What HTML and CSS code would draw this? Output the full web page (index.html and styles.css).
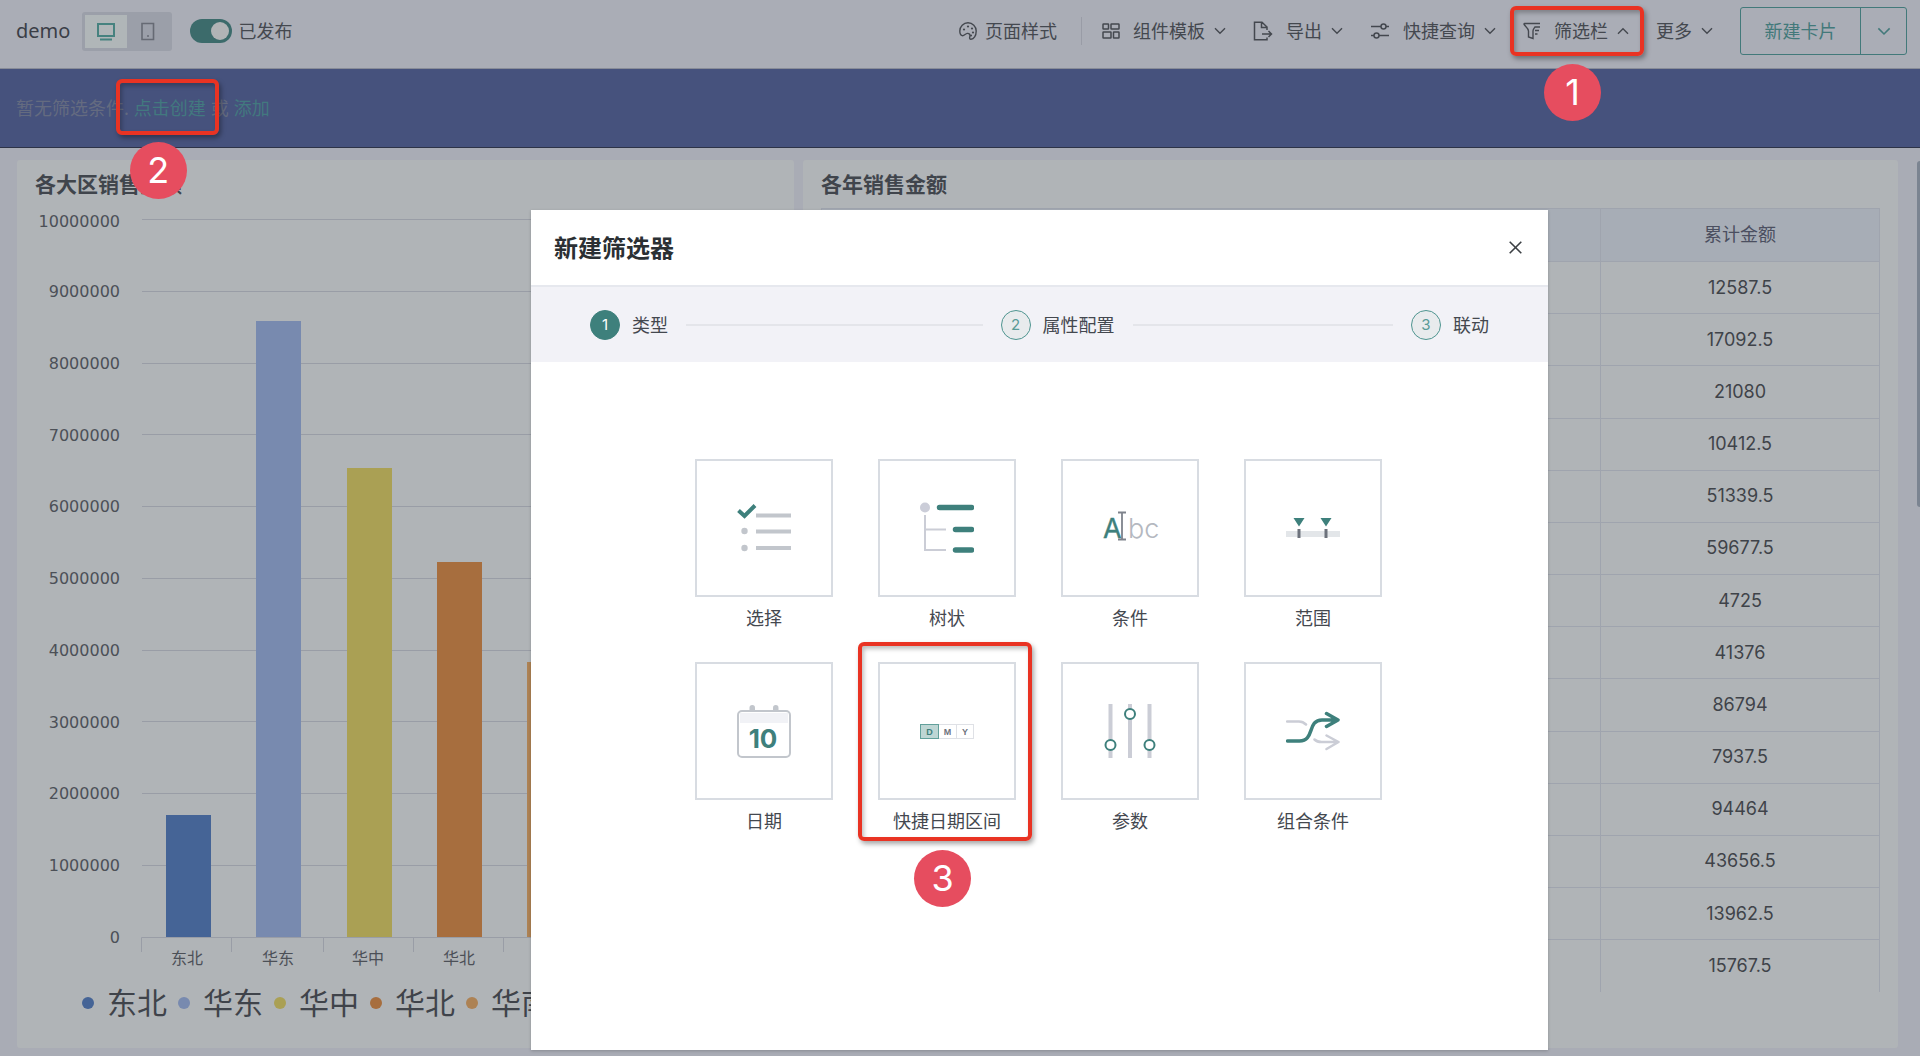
FILE: index.html
```html
<!DOCTYPE html>
<html lang="zh-CN">
<head>
<meta charset="utf-8">
<title>demo</title>
<link rel="stylesheet" href="styles.css">
</head>
<body>
<svg class="defs" aria-hidden="true">
  <symbol id="down" viewBox="0 0 12 8"><path d="M1 1.2l5 5 5-5" fill="none" stroke="currentColor" stroke-width="1.4"/></symbol>
  <symbol id="up" viewBox="0 0 12 8"><path d="M1 6.8l5-5 5 5" fill="none" stroke="currentColor" stroke-width="1.4"/></symbol>
</svg>

<header class="topbar">
  <h1 class="page-name">demo</h1>
  <div class="devices">
    <button class="device active" type="button" aria-label="桌面">
      <svg width="18" height="19" viewBox="0 0 18 19" fill="none" stroke="currentColor" stroke-width="2"><path d="M1 2h16v12H1zM3 17.5h12"/></svg>
    </button>
    <button class="device" type="button" aria-label="手机">
      <svg width="14" height="19" viewBox="0 0 14 19" fill="none" stroke="currentColor" stroke-width="1.6"><path d="M1 1.5h11.500v16H1z"/><path d="M6 14h2"/></svg>
    </button>
  </div>
  <label class="publish"><input type="checkbox" class="switch" checked>已发布</label>

  <nav class="tools">
    <button class="tool tight" type="button">
      <svg width="18" height="18" viewBox="0 0 18 18" fill="none" stroke="currentColor" stroke-width="1.4"><path d="M9 .8a8.200 8.200 0 0 1 8.200 8.200c0 5-2.400 8.200-5.200 8.200-1.400 0-1.600-1.200-1.200-2.400.7-2-.4-3.600-2.600-3.400-1.700.2-3.200 2.800-5 2.300C1.400 13.200.8 11.200.8 9A8.200 8.200 0 0 1 9 .8z"/><g fill="currentColor" stroke="none"><circle cx="5" cy="7.500" r="1.100"/><circle cx="9" cy="4.500" r="1.100"/><circle cx="13" cy="6.500" r="1.100"/><circle cx="14" cy="10.500" r="1.100"/><circle cx="12" cy="13.500" r="1.100"/></g></svg>
      <span>页面样式</span>
    </button>
    <span class="divider"></span>
    <button class="tool" type="button">
      <svg width="18" height="18" viewBox="0 0 18 18" fill="none" stroke="currentColor" stroke-width="1.500"><rect x="1" y="2" width="5.500" height="5" rx=".5"/><rect x="9" y="2" width="8" height="5" rx=".5"/><rect x="1" y="10" width="8" height="6" rx=".5"/><rect x="11.500" y="10" width="5.500" height="6" rx=".5"/></svg>
      <span>组件模板</span><svg class="chev"><use href="#down"/></svg>
    </button>
    <button class="tool export" type="button">
      <svg width="20" height="20" viewBox="0 0 20 20" fill="none" stroke="currentColor" stroke-width="1.500"><path d="M14 9V6L9 1.200H1.500v17.600H14v-2.300M8.500 1.500v5H14M9 13h9M15.500 10l3 3-3 3"/></svg>
      <span>导出</span><svg class="chev"><use href="#down"/></svg>
    </button>
    <button class="tool" type="button">
      <svg width="20" height="18" viewBox="0 0 20 18" fill="none" stroke="currentColor" stroke-width="1.500"><path d="M1 4.500h10M16 4.500h3M1 13.500h3M9 13.500h10"/><circle cx="13.500" cy="4.500" r="2.500"/><circle cx="6.500" cy="13.500" r="2.500"/></svg>
      <span>快捷查询</span><svg class="chev"><use href="#down"/></svg>
    </button>
    <button class="tool marked" type="button">
      <svg width="18" height="18" viewBox="0 0 18 18" fill="none" stroke="currentColor" stroke-width="1.400"><path d="M17 1.500H1.500c-.4 0-.6.5-.4.900C2 4.500 5.500 6 5.500 9v6l4.500 1.500V9c0-2 1.500-3 2-4M11.500 5H17M12 8.500h4M12 12h2.500"/></svg>
      <span>筛选栏</span><svg class="chev"><use href="#up"/></svg>
      <span class="callout callout-1"></span><span class="badge badge-1">1</span>
    </button>
    <button class="tool" type="button"><span>更多</span><svg class="chev"><use href="#down"/></svg></button>
  </nav>
  <div class="create">
    <button class="create-main" type="button">新建卡片</button>
    <button class="create-more" type="button" aria-label="更多卡片"><svg width="14" height="9"><use href="#down"/></svg></button>
  </div>
</header>

<section class="filterbar">
  <span>暂无筛选条件.</span>
  <span class="marked"><a href="#">点击创建</a><span class="callout callout-2"></span><span class="badge badge-2">2</span></span>
  <span>或</span>
  <a href="#">添加</a>
</section>

<main class="board">
  <section class="card chart-card">
    <h2>各大区销售金额</h2>
    <svg class="chart" width="640" height="780" viewBox="0 0 640 780">
      <g class="grid"><path d="M125 22.500H640M125 94.500H640M125 166.500H640M125 237.500H640M125 309.500H640M125 381.500H640M125 453.500H640M125 524.500H640M125 596.500H640M125 668.500H640"/></g>
      <g class="bars">
        <rect x="149" y="618" width="45" height="122" fill="#456496"/>
        <rect x="239" y="124" width="45" height="616" fill="#788aaf"/>
        <rect x="330" y="271" width="45" height="469" fill="#aaa054"/>
        <rect x="420" y="365" width="45" height="375" fill="#a76e3e"/>
        <rect x="510" y="465" width="45" height="275" fill="#ad8254"/>
      </g>
      <path class="axis" d="M124.500 755V740.500H640M214.500 740v15M306.500 740v15M396.500 740v15M486.500 740v15M577.500 740v15"/>
      <g class="ylabels">
        <text x="103" y="30">10000000</text><text x="103" y="100">9000000</text><text x="103" y="172">8000000</text><text x="103" y="244">7000000</text><text x="103" y="315">6000000</text><text x="103" y="387">5000000</text><text x="103" y="459">4000000</text><text x="103" y="531">3000000</text><text x="103" y="602">2000000</text><text x="103" y="674">1000000</text><text x="103" y="746">0</text>
      </g>
      <g class="xlabels"><text x="170" y="767">东北</text><text x="261" y="767">华东</text><text x="351" y="767">华中</text><text x="442" y="767">华北</text><text x="532" y="767">华南</text></g>
    </svg>
    <ul class="legend">
      <li class="c1">东北</li><li class="c2">华东</li><li class="c3">华中</li><li class="c4">华北</li><li class="c5">华南</li>
    </ul>
  </section>

  <section class="card table-card">
    <h2>各年销售金额</h2>
    <table>
      <thead><tr><th></th><th class="amount">累计金额</th></tr></thead>
      <tbody>
        <tr><td></td><td>12587.5</td></tr>
        <tr><td></td><td>17092.5</td></tr>
        <tr><td></td><td>21080</td></tr>
        <tr><td></td><td>10412.5</td></tr>
        <tr><td></td><td>51339.5</td></tr>
        <tr><td></td><td>59677.5</td></tr>
        <tr><td></td><td>4725</td></tr>
        <tr><td></td><td>41376</td></tr>
        <tr><td></td><td>86794</td></tr>
        <tr><td></td><td>7937.5</td></tr>
        <tr><td></td><td>94464</td></tr>
        <tr><td></td><td>43656.5</td></tr>
        <tr><td></td><td>13962.5</td></tr>
        <tr><td></td><td>15767.5</td></tr>
      </tbody>
    </table>
  </section>
  <span class="scrollbar"></span>
</main>

<div class="dialog" role="dialog" aria-labelledby="dialog-title">
  <header class="dialog-head">
    <h2 id="dialog-title">新建筛选器</h2>
    <button class="close" type="button" aria-label="关闭"><svg width="13" height="13" viewBox="0 0 13 13" stroke="currentColor" stroke-width="1.600"><path d="M.7.7l11.600 11.600M12.300.7L.7 12.300"/></svg></button>
  </header>
  <ol class="steps">
    <li class="step current"><span class="num">1</span>类型</li>
    <li class="step"><span class="num">2</span>属性配置</li>
    <li class="step last"><span class="num">3</span>联动</li>
  </ol>
  <div class="types">
    <button class="type" type="button">
      <span class="tile"><svg width="54" height="54" viewBox="0 0 54 54" fill="none"><path d="M19 14.500h35M19 30.500h35M19 47h35" stroke="#c2c6cc" stroke-width="4"/><circle cx="7.500" cy="30" r="3.200" fill="#c2c6cc"/><circle cx="7.500" cy="47" r="3.200" fill="#c2c6cc"/><path d="M1.500 9.500l6 5.500L18 4.500" stroke="#3e807c" stroke-width="4"/></svg></span>
      <span>选择</span>
    </button>
    <button class="type" type="button">
      <span class="tile"><svg width="54" height="54" viewBox="0 0 54 54" fill="none"><path d="M5 14v35h21M5 28.500h21" stroke="#cbcdd6" stroke-width="2"/><circle cx="5" cy="6.500" r="5" fill="#cbcdd8"/><path d="M19.500 6.500h32M35.500 28.500h16M35.500 49h16" stroke="#3e807c" stroke-width="5.500" stroke-linecap="round"/></svg></span>
      <span>树状</span>
    </button>
    <button class="type" type="button">
      <span class="tile"><svg class="abc" width="58" height="54" viewBox="0 0 58 54"><text x="2" y="37" fill="#3e807c" stroke="#3e807c" stroke-width=".4">A</text><text x="27" y="37" fill="#b4b8c0" class="thin">bc</text><path d="M17 11.500h8M17 38.500h8M21 11.500v27" stroke="#7e838c" stroke-width="1.800" fill="none"/></svg></span>
      <span>条件</span>
    </button>
    <button class="type" type="button">
      <span class="tile"><svg width="54" height="54" viewBox="0 0 54 54"><path d="M0 30h54v6H0z" fill="#e3e6e9"/><path d="M7.500 17h11L13 25.500zM34.500 17h11L40 25.500z" fill="#3e807c"/><path d="M11.500 28h3v9h-3zM38.500 28h3v9h-3z" fill="#6d727c"/></svg></span>
      <span>范围</span>
    </button>
    <button class="type" type="button">
      <span class="tile"><svg class="calendar" width="54" height="54" viewBox="0 0 54 54"><rect x="12.500" y="1" width="5.500" height="9" rx="2.700" fill="#c2c6cc"/><rect x="36" y="1" width="5.500" height="9" rx="2.700" fill="#c2c6cc"/><rect x="1" y="7" width="52" height="46" rx="4" fill="#fff" stroke="#c2c6cc" stroke-width="2"/><path d="M3 9h48v10H3z" fill="#f1f2f6"/><text x="26" y="44">10</text></svg></span>
      <span>日期</span>
    </button>
    <button class="type marked" type="button">
      <span class="tile"><svg class="dmy" width="54" height="54" viewBox="0 0 54 54"><rect x="18.500" y="20.500" width="35" height="14" fill="#fff" stroke="#dfe1e6"/><path d="M36.500 20v15" stroke="#dfe1e6"/><rect x=".5" y="20.500" width="18" height="14" fill="#bed6d4" stroke="#62a09b"/><text x="9.500" y="31" fill="#3e807c">D</text><text x="27.500" y="31" fill="#6d727c">M</text><text x="45" y="31" fill="#6d727c">Y</text></svg></span>
      <span>快捷日期区间</span>
      <span class="callout callout-3"></span><span class="badge badge-3">3</span>
    </button>
    <button class="type" type="button">
      <span class="tile"><svg width="54" height="54" viewBox="0 0 54 54"><path d="M7.500 0v54M27 0v54M46.500 0v54" stroke="#cbcdd6" stroke-width="4"/><g fill="#fff" stroke="#3e807c" stroke-width="2"><circle cx="7.500" cy="41" r="5"/><circle cx="27" cy="10" r="5"/><circle cx="46.500" cy="41" r="5"/></g></svg></span>
      <span>参数</span>
    </button>
    <button class="type" type="button">
      <span class="tile"><svg width="54" height="54" viewBox="0 0 54 54" fill="none" stroke-linejoin="round"><path d="M1 17.500h12c3 0 5 1 7 3M28.500 35.500c2 2 4 2.500 7 2.500h17M40.500 31.500L52.500 38l-12 7" stroke="#cbcdd6" stroke-width="2.500" stroke-linecap="round"/><path d="M1.500 37h12C29 37 21 16 36 16h16M40.500 9.500L52 16l-11.500 6.500" stroke="#3e807c" stroke-width="3.500" stroke-linecap="round"/></svg></span>
      <span>组合条件</span>
    </button>
  </div>
</div>
</body>
</html>
```

FILE: styles.css
```css
* { box-sizing: border-box; }
html { height: 100%; }
body {
  margin: 0;
  position: relative;
  min-height: 100%;
  display: flex;
  flex-direction: column;
  overflow: hidden;
  background: #a9acb5;
  color: #44484f;
  font: 18px/26px "Noto Sans", "Noto Sans CJK SC", sans-serif;
}
h1, h2, ul, ol { margin: 0; padding: 0; font-weight: 400; list-style: none; }
button { margin: 0; padding: 0; border: 0; background: none; color: inherit; font: inherit; }
a { color: #42797f; text-decoration: none; }
svg { display: block; flex: none; }
.defs { position: absolute; width: 0; height: 0; }

/* annotations */
.marked { position: relative; }
.callout {
  position: absolute;
  z-index: 2;
  border: 4px solid #e93323;
  border-radius: 6px;
  box-shadow: 2px 3px 5px rgba(0, 0, 0, .35), inset 2px 3px 4px rgba(0, 0, 0, .25);
}
.badge {
  position: absolute;
  z-index: 3;
  width: 57px;
  height: 57px;
  border-radius: 50%;
  background: #e64d5f;
  color: #fff;
  font: 36px/57px Inter, "Liberation Sans", sans-serif;
  text-align: center;
}
.callout-1 { inset: -12px -15px -12px -13px; }
.badge-1 { left: 21px; top: 46px; }
.callout-2 { inset: -16px -13px -14px -18px; }
.badge-2 { left: -4px; top: 47px; }
.callout-3 { inset: -20px -16px -5px -20px; }
.badge-3 { left: 36px; top: 188px; }

/* top bar */
.topbar {
  display: flex;
  align-items: center;
  height: 69px;
  padding: 0 13px 6px 16px;
  border-bottom: 1px solid #888c98;
  background: #aaadb6;
}
.page-name { font-size: 20px; color: #3a3e47; }
.devices {
  display: flex;
  margin-left: 12px;
  padding: 3px;
  border-radius: 3px;
  background: #9b9fa9;
}
.device {
  display: grid;
  place-items: center;
  width: 42px;
  height: 33px;
  color: #666a74;
}
.device.active { background: #b0b6b8; color: #46827f; }
.publish { display: flex; align-items: center; gap: 6px; margin-left: 18px; }
.switch {
  appearance: none;
  display: grid;
  justify-content: end;
  align-content: center;
  width: 42px;
  height: 24px;
  margin: 0;
  padding: 3px;
  border-radius: 12px;
  background: #3c6b6b;
}
.switch::before { content: ""; width: 18px; height: 18px; border-radius: 50%; background: #b1b4b6; }
.tools { display: flex; align-items: center; gap: 27px; margin-left: auto; }
.tool { display: flex; align-items: center; gap: 13px; height: 26px; white-space: nowrap; }
.tool.tight { gap: 8px; }
.tool .chev { width: 12px; height: 8px; margin-left: -4px; }
.divider { width: 1px; height: 28px; margin: 0 -7px 0 -3px; background: #999ca6; }
.create {
  display: flex;
  height: 48px;
  margin-left: 27px;
  border: 1px solid #42797a;
  border-radius: 3px;
  color: #42797a;
}
.create-main { width: 119px; }
.create-more { display: grid; place-items: center; width: 46px; border-left: 1px solid #42797a; }

/* filter bar */
.filterbar {
  display: flex;
  align-items: center;
  gap: 5px;
  height: 79px;
  padding: 0 16px;
  border-bottom: 1px solid #2d3347;
  background: #46527d;
  color: #646b80;
}

/* dashboard */
.board {
  position: relative;
  flex: 1;
  display: grid;
  grid-template-columns: 777px 1fr;
  gap: 9px;
  padding: 12px 22px 8px 17px;
}
.card { border-radius: 3px; background: #b0b4b7; overflow: hidden; }
.card h2 { font-size: 21px; line-height: 30px; font-weight: 700; color: #40454c; }
.chart-card h2 { padding: 9px 18px 0; }
.chart { margin-top: -2px; }
.grid path, .axis { fill: none; stroke: #999da6; stroke-width: 1; }
.ylabels { font: 16px "DejaVu Sans", sans-serif; text-anchor: end; fill: #4c5057; }
.xlabels { font: 16px "Noto Sans CJK SC", sans-serif; text-anchor: middle; fill: #4c5057; }
.legend { display: flex; gap: 11px; margin-top: 4px; padding-left: 65px; font-size: 30px; line-height: 44px; color: #3f434a; }
.legend li { display: flex; align-items: center; gap: 13px; white-space: nowrap; }
.legend li::before { content: ""; width: 12px; height: 12px; border-radius: 50%; background: currentColor; }
.legend .c1::before { background: #456496; }
.legend .c2::before { background: #788aaf; }
.legend .c3::before { background: #aaa054; }
.legend .c4::before { background: #a76e3e; }
.legend .c5::before { background: #ad8254; }

.table-card { display: flex; flex-direction: column; padding: 9px 18px 56px; }
.table-card table {
  flex: 1;
  width: 100%;
  margin-top: 9px;
  border-collapse: collapse;
  table-layout: fixed;
  font-family: Inter, "Noto Sans CJK SC", sans-serif;
  text-align: center;
}
.table-card th, .table-card td { height: 52px; padding: 0; border: 1px solid #9fa4ae; font-weight: 400; }
.table-card tr:last-child td { border-bottom: 0; }
.table-card th { height: 53px; background: #a7adb6; color: #4b4f60; }
.table-card td { color: #3f4349; }
.amount { width: 279px; }
.scrollbar { position: absolute; right: 0; top: 13px; width: 3px; height: 346px; border-radius: 3px 0 0 3px; background: #7b8491; }

/* dialog */
.dialog {
  position: absolute;
  z-index: 1;
  left: 531px;
  top: 210px;
  width: 1017px;
  background: #fff;
  box-shadow: 0 1px 3px rgba(0, 0, 0, .2);
}
.dialog-head {
  display: flex;
  align-items: center;
  justify-content: space-between;
  height: 77px;
  padding: 0 26px 0 23px;
  border-bottom: 2px solid #e6e8ee;
}
.dialog-head h2 { font-size: 24px; line-height: 36px; font-weight: 700; color: #2b3034; }
.close { color: #3c4044; }
.steps { display: flex; align-items: center; height: 75px; padding: 0 59px; background: #f2f2f7; }
.step { display: flex; flex: 1 1 411px; align-items: center; gap: 12px; white-space: nowrap; }
.step:not(.last)::after { content: ""; flex: 1; height: 2px; margin: 0 18px 0 6px; background: #e4e5ea; }
.step.last { flex: none; }
.num {
  width: 30px;
  height: 30px;
  border: 1px solid #4f9590;
  border-radius: 50%;
  background: #e8ebed;
  color: #5a9b97;
  font: 15px/28px Inter, sans-serif;
  text-align: center;
}
.current .num { border-color: #3e807c; background: #3e807c; color: #fff; }
.types {
  display: grid;
  grid-template-columns: repeat(4, 138px);
  gap: 29px 45px;
  padding: 97px 0 214px 164px;
}
.type { display: flex; flex-direction: column; align-items: center; gap: 8px; height: 174px; white-space: nowrap; }
.tile { display: grid; place-items: center; width: 138px; height: 138px; border: 2px solid #d8dce2; }
.abc { font: 27px Inter, sans-serif; }
.abc .thin { font-weight: 300; }
.calendar { font: 700 26px Inter, sans-serif; text-anchor: middle; fill: #3e807c; }
.dmy { font: 700 9px "Liberation Sans", sans-serif; text-anchor: middle; }
```
